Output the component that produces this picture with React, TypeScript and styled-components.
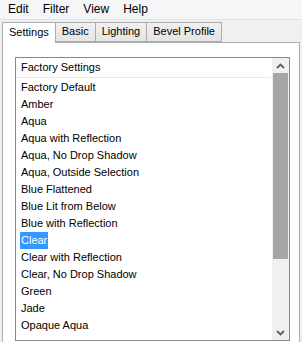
import React from 'react';
import styled, { createGlobalStyle } from 'styled-components';

const GlobalStyle = createGlobalStyle`
  html, body {
    margin: 0;
    padding: 0;
    background: #f0f0f0;
  }
  body {
    font-family: "Liberation Sans", Arial, sans-serif;
    font-size: 11px;
    color: #000;
  }
`;

const Frame = styled.div`
  width: 302px;
  height: 342px;
  display: flex;
  flex-direction: column;
  overflow: hidden;
  background: #f0f0f0;
`;

const MenuBar = styled.div`
  height: 19px;
  display: flex;
  align-items: center;
  padding-left: 1px;
  background: #f5f6f7;
  border-bottom: 1px solid #dae4ef;
  font-size: 12px;
`;

const MenuItem = styled.span`
  padding: 0 7px;
  line-height: 19px;
`;

const TabStrip = styled.div`
  display: flex;
  align-items: flex-end;
  height: 21px;
  padding-left: 2px;
  margin-top: 1px;
  position: relative;
  z-index: 1;
`;

const Tab = styled.div<{ $active?: boolean }>`
  height: ${p => (p.$active ? '20px' : '18px')};
  line-height: ${p => (p.$active ? '19px' : '17px')};
  padding: 0 6px;
  margin-left: ${p => (p.$active ? '0' : '-1px')};
  margin-bottom: ${p => (p.$active ? '-1px' : '0')};
  border: 1px solid #acacac;
  border-bottom: ${p => (p.$active ? 'none' : '1px solid #acacac')};
  background: ${p => (p.$active ? '#ffffff' : 'linear-gradient(#f0f0f0, #e5e5e5)')};
  box-sizing: content-box;
  font-size: 11px;
`;

const Panel = styled.div`
  flex: 1;
  margin: 0 2px 0 2px;
  border: 1px solid #acacac;
  border-bottom: none;
  background: #ffffff;
  padding: 14px 9px 0 12px;
  display: flex;
`;

const ListBox = styled.div`
  flex: 1;
  border: 1px solid #828790;
  background: #ffffff;
  display: flex;
  height: 284px;
  box-sizing: border-box;
`;

const ListBody = styled.div`
  flex: 1;
  display: flex;
  flex-direction: column;
  overflow: hidden;
`;

const GroupHeader = styled.div`
  height: 19px;
  line-height: 19px;
  padding-left: 5px;
  border-bottom: 1px solid #e5e8ee;
  margin-bottom: 1px;
  margin-right: 1px;
`;

const Item = styled.div`
  height: 17px;
  line-height: 17px;
  padding-left: 4px;
  white-space: nowrap;
`;

const ItemText = styled.span<{ $selected?: boolean }>`
  display: inline-block;
  padding: 0 1px;
  background: ${p => (p.$selected ? '#3399ff' : 'transparent')};
  color: ${p => (p.$selected ? '#ffffff' : '#000000')};
`;

const ScrollBar = styled.div`
  width: 17px;
  background: #f0f0f0;
  display: flex;
  flex-direction: column;
`;

const ArrowButton = styled.div`
  height: 15px;
  display: flex;
  align-items: center;
  justify-content: center;
`;

const Track = styled.div`
  flex: 1;
  display: flex;
  flex-direction: column;
`;

const Thumb = styled.div`
  height: 186px;
  margin: 0 1px;
  background: #a6a6a6;
`;

const items = [
  'Factory Default',
  'Amber',
  'Aqua',
  'Aqua with Reflection',
  'Aqua, No Drop Shadow',
  'Aqua, Outside Selection',
  'Blue Flattened',
  'Blue Lit from Below',
  'Blue with Reflection',
  'Clear',
  'Clear with Reflection',
  'Clear, No Drop Shadow',
  'Green',
  'Jade',
  'Opaque Aqua',
];

const Chevron = ({ up }: { up?: boolean }) => (
  <svg width="9" height="6" viewBox="0 0 9 6">
    <path
      d={up ? 'M1 5 L4.5 1.5 L8 5' : 'M1 1 L4.5 4.5 L8 1'}
      fill="none"
      stroke="#606060"
      strokeWidth="1.8"
    />
  </svg>
);

export default function App() {
  return (
    <Frame>
      <GlobalStyle />
      <MenuBar>
        <MenuItem>Edit</MenuItem>
        <MenuItem>Filter</MenuItem>
        <MenuItem>View</MenuItem>
        <MenuItem>Help</MenuItem>
      </MenuBar>
      <TabStrip>
        <Tab $active>Settings</Tab>
        <Tab>Basic</Tab>
        <Tab>Lighting</Tab>
        <Tab>Bevel Profile</Tab>
      </TabStrip>
      <Panel>
        <ListBox>
          <ListBody>
            <GroupHeader>Factory Settings</GroupHeader>
            {items.map(name => (
              <Item key={name}>
                <ItemText $selected={name === 'Clear'}>{name}</ItemText>
              </Item>
            ))}
          </ListBody>
          <ScrollBar>
            <ArrowButton>
              <Chevron up />
            </ArrowButton>
            <Track>
              <Thumb />
            </Track>
            <ArrowButton>
              <Chevron />
            </ArrowButton>
          </ScrollBar>
        </ListBox>
      </Panel>
    </Frame>
  );
}
